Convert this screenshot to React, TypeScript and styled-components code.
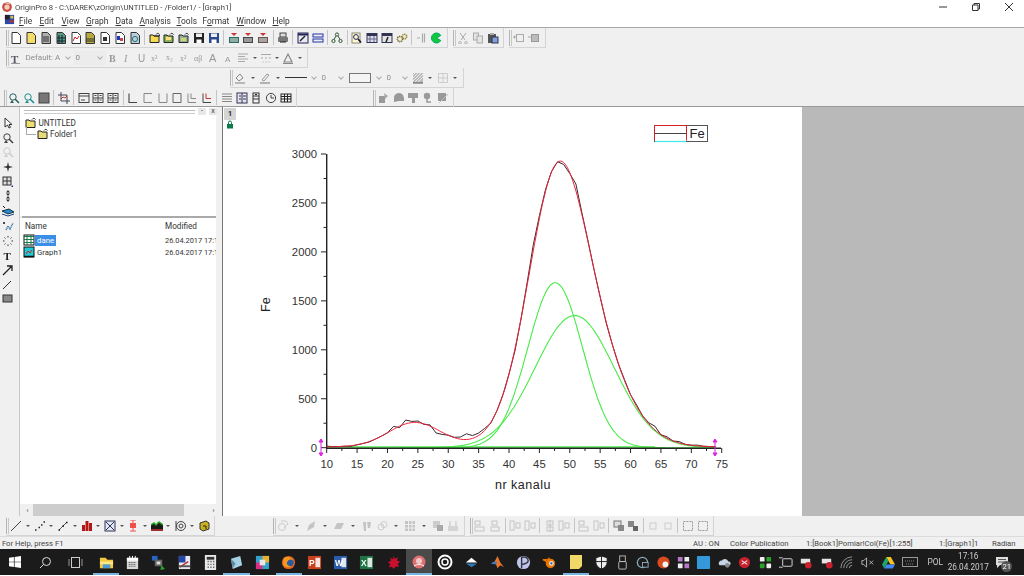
import React from "react";
import styled, { createGlobalStyle } from "styled-components";

const GlobalStyle = createGlobalStyle`
    html, body {
        margin: 0;
        width: 1024px;
        height: 576px;
        overflow: hidden;
        background: #fff;
        font-family: Roboto, "Liberation Sans", Arial, sans-serif;
    }
`
const Window = styled.div`
    width: 1024px;
    height: 576px;
    display: flex;
    flex-direction: column;
    font-size: 8px;
    color: #333;
    filter: blur(0.3px);
`
const TitleBar = styled.div`
    height: 14px;
    display: flex;
    align-items: center;
    padding-left: 1px;
    gap: 2px;
    font-size: 7.7px;
    color: #444;
`
const TitleText = styled.span`
    flex: 1;
`
const WinButton = styled.span`
    width: 31px;
    display: flex;
    justify-content: center;
`
const MenuBar = styled.div`
    height: 13px;
    display: flex;
    align-items: center;
    padding-left: 4px;
    font-size: 8.4px;
`
const MenuItem = styled.span<{ $w: number }>`
    width: ${p => p.$w}px;
    u { text-underline-offset: 1px; }
`
const ToolArea = styled.div`
    height: 80px;
    background: #f0f0f0;
    border-top: 1px solid #a8a8a8;
    border-bottom: 1px solid #9a9a9a;
    box-sizing: border-box;
`
const Row = styled.div<{ $pad: number }>`
    height: 20px;
    display: flex;
    padding-left: ${p => p.$pad}px;
`
const Toolbar = styled.div<{ $gap?: number; $btn?: number; $arrow?: number }>`
    --btn: ${p => p.$btn ?? 14.8}px;
    --arrow: ${p => p.$arrow ?? 10}px;
    margin-left: ${p => p.$gap ?? 0}px;
    display: flex;
    align-items: center;
    height: 19px;
    padding-right: 3px;
    border-right: 1px solid #d4d4d4;
    border-bottom: 1px solid #d4d4d4;
`
const Gripper = styled.i`
    width: 3px;
    height: 16px;
    flex: none;
    box-sizing: border-box;
    border-left: 1px solid #b4b4b4;
    border-right: 1px solid #c8c8c8;
`
const Btn = styled.span<{ $off?: boolean }>`
    width: var(--btn);
    flex: none;
    display: flex;
    justify-content: center;
    opacity: ${p => (p.$off ? 0.5 : 1)};
    svg { flex: none; }
`
const Arrow = styled.span`
    width: var(--arrow);
    flex: none;
    display: flex;
    justify-content: center;
    &::after {
        content: "";
        border-left: 2.5px solid transparent;
        border-right: 2.5px solid transparent;
        border-top: 2.5px solid #555;
    }
`
const Sep = styled.span`
    width: 5px;
    height: 15px;
    flex: none;
    display: flex;
    justify-content: center;
    &::after {
        content: "";
        width: 1px;
        background: #c4c4c4;
    }
`
const Combo = styled.span<{ $w: number; $faint?: boolean }>`
    width: ${p => p.$w}px;
    height: 14px;
    flex: none;
    box-sizing: border-box;
    display: flex;
    align-items: center;
    padding: 0 2px;
    gap: 2px;
    font-size: 8px;
    color: #8c8c8c;
    background: ${p => (p.$faint ? "#ececec" : "transparent")};
    &::after {
        content: "";
        width: 4px;
        height: 4px;
        margin: -2px 2px 0 auto;
        flex: none;
        box-sizing: border-box;
        border-right: 1px solid #aaa;
        border-bottom: 1px solid #aaa;
        transform: rotate(45deg);
    }
`
const LineSample = styled.i`
    width: 22px;
    height: 1px;
    background: #333;
`
const RectSample = styled.i`
    width: 20px;
    height: 8px;
    border: 1px solid #777;
    background: #f4f4f4;
`
const Main = styled.div`
    height: 409px;
    display: flex;
`
const SideTools = styled.div`
    width: 20px;
    background: #f0f0f0;
    padding: 10px 3px 0 0;
    box-sizing: border-box;
    display: flex;
    flex-direction: column;
    align-items: center;
    gap: 2.7px;
    border-right: 1px solid #c8c8c8;
`
const SideTool = styled.span`
    display: flex;
    height: 12px;
`
const Explorer = styled.div`
    width: 203px;
    flex: none;
    background: #f0f0f0;
    border-right: 1px solid #777;
    box-sizing: border-box;
    display: flex;
    flex-direction: column;
    padding-right: 6px;
`
const DockHead = styled.div`
    height: 9px;
    display: flex;
    align-items: center;
    background: #fff;
    padding: 0 0 0 4px;
    gap: 3px;
    margin-right: -1px;
`
const DockLine = styled.i`
    flex: 1;
    height: 2px;
    border-top: 1px solid #bbb;
    border-bottom: 1px solid #ccc;
`
const DockBtn = styled.span`
    width: 8px;
    font-size: 7px;
    line-height: 7px;
    text-align: center;
    color: #444;
    background: #e8e8e8;
`
const Tree = styled.div`
    height: 100px;
    background: #fff;
    padding: 1px 0 0 5px;
    box-sizing: border-box;
`
const TreeRow = styled.div<{ $depth: number }>`
    height: 11.5px;
    display: flex;
    align-items: center;
    gap: 1.5px;
    margin-left: ${p => p.$depth}px;
    font-size: 8.2px;
`
const TreeElbow = styled.i`
    width: 9px;
    height: 7px;
    margin: -7px -1px 0 -8px;
    border-left: 1px solid #aaa;
    border-bottom: 1px solid #aaa;
`
const Splitter = styled.div`
    height: 2px;
    margin: 0 0 0 2px;
    background: #a9a9a9;
`
const List = styled.div`
    flex: 1;
    background: #fff;
    padding: 2px 0 0 5px;
    overflow: hidden;
`
const ListRow = styled.div`
    height: 12px;
    display: grid;
    grid-template-columns: 140px 52px;
    align-items: center;
    font-size: 7.4px;
    white-space: nowrap;
`
const ListHead = styled(ListRow)`
    margin-bottom: 2px;
    font-size: 8.2px;
`
const NameCell = styled.span`
    display: flex;
    align-items: center;
    margin-left: -2px;
    font-size: 7.8px;
`
const Name = styled.span<{ $sel?: boolean }>`
    padding: 1px 2px;
    color: ${p => (p.$sel ? "#fff" : "#333")};
    background: ${p => (p.$sel ? "#3b8fe6" : "transparent")};
`
const HScroll = styled.div`
    height: 12px;
    margin: 0 -3px 0 2px;
    background: #f0f0f0;
    display: flex;
    align-items: center;
    font-size: 8px;
    color: #555;
`
const ScrollEnd = styled.span`
    width: 11px;
    text-align: center;
`
const ScrollThumb = styled.i`
    width: 151px;
    height: 100%;
    background: #cdcdcd;
`
const ScrollRest = styled.i`
    flex: 1;
`
const Page = styled.div`
    width: 579px;
    position: relative;
    background: #fff;
    flex: none;
`
const PageTab = styled.span`
    position: absolute;
    left: 1px;
    top: 1px;
    width: 12px;
    height: 12px;
    background: #d4d4d4;
    text-align: center;
    font-weight: bold;
    font-size: 8px;
    line-height: 12px;
`
const LockMark = styled.span`
    position: absolute;
    left: 3px;
    top: 13px;
`
const Plot = styled.svg`
    display: block;
`
const Grey = styled.div`
    flex: 1;
    background: #b9b9b9;
`
const BottomBar = styled.div`
    height: 20px;
    background: #f0f0f0;
    display: flex;
    padding-left: 6px;
`
const StatusBar = styled.div`
    height: 13px;
    background: #f0f0f0;
    border-top: 1px solid #dcdcdc;
    box-sizing: border-box;
    display: flex;
    align-items: center;
    font-size: 7.7px;
    color: #444;
`
const StatusCell = styled.span<{ $w: number }>`
    width: ${p => p.$w}px;
    flex: none;
    white-space: nowrap;
`
const Taskbar = styled.div`
    height: 26px;
    background: #1b1b1b;
    display: flex;
    align-items: stretch;
    color: #ddd;
`
const TaskSlot = styled.span<{ $w: number; $active?: boolean; $running?: boolean; $gap?: number }>`
    width: ${p => p.$w}px;
    flex: none;
    margin-left: ${p => p.$gap ?? 0}px;
    display: flex;
    align-items: center;
    justify-content: center;
    box-sizing: border-box;
    background: ${p => (p.$active ? "#4a4a4a" : "transparent")};
    border-bottom: 2px solid ${p => (p.$running ? "#7ab4de" : "transparent")};
    border-top: 2px solid transparent;
`
const Lang = styled.span`
    font-size: 8.4px;
    color: #ccc;
`
const Clock = styled.span`
    text-align: center;
    font-size: 8.2px;
    line-height: 11px;
    color: #ccc;
`
const NotifyCount = styled.span`
    position: absolute;
    right: -4px;
    bottom: -4px;
    width: 11px;
    height: 11px;
    border-radius: 50%;
    background: #555;
    color: #fff;
    font-size: 7.6px;
    line-height: 11px;
    text-align: center;
`
const Notify = styled.span`
    position: relative;
    display: flex;
`

// ---- toolbar icons ----
const sv = (children: React.ReactNode, size = 12) => (
    <svg width={size} height={size} viewBox="0 0 12 12" fill="none">{children}</svg>
)
const doc = (fill: string, inner?: React.ReactNode) => (
    <>
        <path d="M2 .5h5.5L10.5 3.5v8H2z" fill={fill} stroke="#333" />
        {inner}
    </>
)
const folder = (fill: string, inner?: React.ReactNode) => (
    <>
        <path d="M1 3h3l1 1h5v6.5H1z" fill={fill} stroke="#222" />
        <path d="M7 2.5c1-1.5 2.5-1.5 3.5 0" stroke="#222" />
        {inner}
    </>
)
const floppy = (fill: string) => (
    <>
        <rect x="1" y="1" width="10" height="10" fill={fill} />
        <rect x="3" y="1.5" width="6" height="3.5" fill="#eee" />
        <rect x="3.5" y="7.5" width="5" height="3.5" fill="#fff" />
    </>
)
const imp = (c: string) => (
    <>
        <rect x="1" y="5" width="10" height="6" fill={c} />
        <path d="M2 7h8M2 9h8" stroke="#eee" />
        <path d="M3 1l3 3 3-3z" fill="#c33" />
    </>
)
const frame = (d: string) => <path d={d} stroke="#444" strokeWidth="1.1" />
const grid2 = (
    <>
        <rect x="1" y="1.5" width="10" height="9" stroke="#444" />
        <path d="M1 6h10M6 1.5v9" stroke="#444" />
        <path d="M2.5 3.5h2M7.5 3.5h2M2.5 8h2M7.5 8h2" stroke="#444" />
    </>
)
const cmb = (c: string) => (
    <>
        <circle cx="5" cy="5" r="3.2" stroke={c} />
        <path d="M7 7l4 4" stroke={c} strokeWidth="1.6" />
        <path d="M2 11l2-3 2 3z" fill={c} />
    </>
)
const letter = (ch: string, x: number, y: number, size: number, extra?: React.SVGProps<SVGTextElement>) => (
    <text x={x} y={y} fontSize={size} fontFamily="Liberation Serif" fill="#999" {...extra}>{ch}</text>
)

const icons: Record<string, React.ReactNode> = {
    new: sv(doc("#fff")),
    docY: sv(doc("#f4dc6a")),
    docG: sv(doc("#b0b0b0", <path d="M3 5h6M3 7h6M3 9h6" stroke="#333" />)),
    docT: sv(doc("#5a9a80", <path d="M4 3v8M7 3v8M2 6h8M2 9h8" stroke="#123" />)),
    docR: sv(doc("#fff", <path d="M3 9l2-4 2 2 2-3" stroke="#c22" />)),
    docO: sv(doc("#b6a83c", <path d="M2 7h8M2 9h8" stroke="#333" />)),
    docM: sv(doc("#fff", <rect x="4" y="5" width="4" height="4" fill="#333" />)),
    docB: sv(doc("#fff", <><rect x="3" y="4" width="3" height="4" fill="#23c" /><rect x="6" y="6" width="3" height="3" fill="#c44" /></>)),
    docC: sv(doc("#bcd", <circle cx="6" cy="7" r="2.6" stroke="#277" />)),
    open: sv(folder("#f4d84e", <path d="M5 4h5l1-1" stroke="#222" />)),
    openT: sv(folder("#8ab45c", <rect x="3" y="5" width="5" height="3" fill="#ffe27a" />)),
    openG: sv(folder("#9ab0a0", <rect x="3" y="6" width="5" height="3" fill="#c9d86a" />)),
    save: sv(floppy("#222")),
    saveAs: sv(floppy("#2a4a90")),
    impA: sv(imp("#2c6a5c")),
    impB: sv(imp("#444")),
    impC: sv(imp("#655")),
    print: sv(<><rect x="3" y="1" width="6" height="4" fill="#ddd" stroke="#444" /><rect x="1" y="5" width="10" height="5" rx="1" fill="#777" /><path d="M3 10h6" stroke="#222" /></>),
    notes: sv(<><rect x="1" y="1" width="10" height="10" fill="#e8e8f4" stroke="#225" /><path d="M1 2.5h10" stroke="#225" strokeWidth="2" /><path d="M3 9l5-5" stroke="#222" strokeWidth="1.5" /></>),
    lines: sv(<><rect x="1" y="2" width="10" height="3" stroke="#2233aa" /><rect x="1" y="7" width="10" height="3" stroke="#2233aa" /></>),
    tree: sv(<><circle cx="6" cy="2.5" r="1.6" stroke="#353" /><circle cx="2.5" cy="9" r="1.6" stroke="#353" /><circle cx="9.5" cy="9" r="1.6" stroke="#353" /><path d="M5 4l-2 3.5M7 4l2 3.5" stroke="#353" /></>),
    find: sv(<><rect x="1" y="1" width="8" height="10" fill="#fffbd0" stroke="#887" /><circle cx="5" cy="5" r="2.4" stroke="#226" /><path d="M7 7l3 3.5" stroke="#113" strokeWidth="1.6" /></>),
    sheet: sv(<><rect x="1" y="1.5" width="10" height="9" fill="#dde" stroke="#335" /><path d="M1 3h10" stroke="#335" strokeWidth="2" /><path d="M4 4v6M8 4v6M1 7h10" stroke="#668" /></>),
    sheet2: sv(<><rect x="1" y="1.5" width="10" height="9" fill="#e4e4e4" stroke="#335" /><path d="M1 3h10" stroke="#335" strokeWidth="2" /><path d="M7 5L5 10" stroke="#222" strokeWidth="1.5" /></>),
    gears: sv(<><circle cx="4" cy="7" r="2.6" stroke="#7a6a20" strokeWidth="1.6" strokeDasharray="1.2 .6" /><circle cx="8.5" cy="4.5" r="2.2" stroke="#998428" strokeWidth="1.6" strokeDasharray="1.2 .6" /></>),
    bars: sv(<path d="M2 6h3M7.5 1.5v9M9.5 1.5v9" stroke="#aaa" strokeWidth="1.2" />),
    pac: sv(<path d="M10.8 3.5A5 5 0 1 0 10.8 8.5L6.5 6z" fill="#12c93c" stroke="#0a6" />),
    cut: sv(<path d="M3 1l5 7M9 1L4 8M3 9.5a1.3 1.3 0 1 0 .1 0M9 9.5a1.3 1.3 0 1 0 .1 0" stroke="#aaa" />),
    copy: sv(<><rect x="1.5" y="1" width="5" height="7" fill="#e4e4e4" stroke="#aaa" /><rect x="5" y="4" width="5.5" height="7" fill="#e4e4e4" stroke="#aaa" /></>),
    paste: sv(<><rect x="1" y="2" width="8" height="9" fill="#555" /><rect x="3" y="1" width="4" height="2" fill="#aaa" /><rect x="5" y="5" width="6" height="6" fill="#7da0e0" stroke="#334" /></>),
    win1: sv(<><rect x="3.5" y="2.5" width="7" height="7" stroke="#aaa" /><path d="M0 5h3M1.5 3.5v3" stroke="#aaa" /></>),
    win2: sv(<><rect x="3.5" y="2.5" width="7" height="7" fill="#bbb" stroke="#999" /><path d="M0 5h3" stroke="#aaa" /></>),
    typeT: sv(<><text x="1" y="10.5" fontSize="11" fontWeight="bold" fontFamily="Liberation Serif" fill="#556">T</text><path d="M1 11.5h9" stroke="#999" /></>),
    bold: sv(letter("B", 2, 10, 10, { fontWeight: "bold" })),
    ital: sv(letter("I", 3, 10, 10, { fontStyle: "italic" })),
    under: sv(letter("U", 2, 10, 10, { fontFamily: "Liberation Sans" })),
    sup: sv(letter("x²", 1, 9, 8)),
    sub: sv(letter("x₂", 1, 8, 8)),
    subsup: sv(letter("x²", 1, 9, 8)),
    greek: sv(letter("αβ", 0, 9, 8)),
    aUp: sv(letter("A", 1, 10, 11, { fontFamily: "Liberation Sans" })),
    aDown: sv(letter("A", 2, 10, 8, { fontFamily: "Liberation Sans" })),
    align: sv(<path d="M1 2h10M1 4.5h7M1 7h10M1 9.5h7" stroke="#aaa" />),
    dash: sv(<path d="M1 2.5h10M1 6h2M5 6h2M9 6h2M3 9.5v1M6 9.5v1M9 9.5v1" stroke="#aaa" />),
    fontCol: sv(<><path d="M2 10L6 2l4 8z" stroke="#888" strokeWidth="1.2" /><path d="M1 11.5h10" stroke="#888" /></>),
    fill: sv(<><path d="M2 6l4-4 3 4-4 3z" stroke="#888" /><path d="M1 11h10" stroke="#aaa" strokeWidth="1.6" /></>),
    pen: sv(<><path d="M3 8l5-6 2 1-5 6z" stroke="#999" /><path d="M1 11h10" stroke="#888" strokeWidth="1.2" /></>),
    pattern: sv(<><rect x="1" y="1" width="10" height="10" fill="#bbb" /><path d="M1 3l2-2M1 6l5-5M1 9l8-8M3 10l8-8M6 10l5-5" stroke="#fff" strokeWidth=".7" /><path d="M1 11h10" stroke="#555" /></>),
    border: sv(<path d="M1.5 1.5h9v9h-9zM6 1.5v9M1.5 6h9" stroke="#ccc" />),
    rescale: sv(cmb("#2a6060")),
    rescale2: sv(cmb("#1f8e8e")),
    block: sv(<rect x="1" y="1" width="10" height="10" fill="#777" stroke="#444" />),
    crop: sv(<><path d="M3 0v9h9M0 3h9v9" stroke="#445" /><path d="M3 7l2-2 2 1 2-2" stroke="#c33" /></>),
    frameA: sv(<><rect x="1" y="1.5" width="10" height="9" stroke="#444" /><path d="M1 4h10M3 8h4" stroke="#444" /></>),
    gridA: sv(grid2),
    gridB: sv(grid2),
    ln1: sv(frame("M2 1.5v9h8")),
    ln2: sv(<path d="M10 1.5H2v9h8" stroke="#888" />),
    ln3: sv(<path d="M2 1.5v9h8v-9" stroke="#888" />),
    ln4: sv(<path d="M2 10.5v-9h8v9h-8" stroke="#666" />),
    ln5: sv(<><path d="M2 1.5v9h8" stroke="#888" /><path d="M5 1.5v5h5" stroke="#888" /></>),
    ln6: sv(<><path d="M2 1.5v9h8" stroke="#444" /><path d="M5 1.5v5h5" stroke="#c33" /></>),
    list: sv(<path d="M1 2h10M1 4.5h10M1 7h10M1 9.5h10" stroke="#888" />),
    cols: sv(<><rect x="1" y="1" width="10" height="10" fill="#e4e4ee" stroke="#335" /><path d="M6 1v10M3 4h2M7 4h3M3 7h2M7 7h3" stroke="#335" /></>),
    thin: sv(<><rect x="3" y="1" width="6" height="10" stroke="#333" /><path d="M3 4h6M3 7h6" stroke="#333" /><rect x="5" y="2" width="2" height="1" fill="#333" /></>),
    clock: sv(<><circle cx="6" cy="6" r="4.6" stroke="#444" /><path d="M6 3v3h3" stroke="#444" /></>),
    table: sv(<><rect x="1" y="2" width="10" height="8" stroke="#222" /><path d="M1 4.5h10M1 7h10M4.5 2v8M7.5 2v8" stroke="#222" /></>),
    g1: sv(<><rect x="1" y="4" width="6" height="7" fill="#999" /><path d="M6 1l4 3-3 3z" fill="#aaa" /></>),
    g2: sv(<path d="M1 6a5 5 0 0 1 9-3l1 3v3H6L1 10z" fill="#999" />),
    g3: sv(<><rect x="1" y="1" width="10" height="5" fill="#999" /><rect x="5" y="6" width="3" height="5" fill="#999" /></>),
    g4: sv(<><circle cx="5" cy="4" r="3.2" fill="#999" /><path d="M5 7v3h4" stroke="#999" strokeWidth="1.5" /></>),
    g5: sv(<><rect x="1" y="1" width="8" height="8" fill="#999" /><path d="M2 11L11 2" stroke="#bbb" /></>),
    lineA: sv(<path d="M1 11L11 1" stroke="#444" />),
    dots: sv(<path d="M1 10h1.5M4.5 7.5H6M7 5h1.5M9.5 2H11" stroke="#222" strokeWidth="1.4" />),
    lineS: sv(<><path d="M2 10l8-8" stroke="#555" /><path d="M1.5 10H3M5.5 6H7M9 2.5h1.5" stroke="#111" strokeWidth="1.5" /></>),
    columns: sv(<><rect x="1" y="5" width="3" height="6" fill="#b01818" /><rect x="4.5" y="1" width="3" height="10" fill="#b01818" /><rect x="8" y="3" width="3" height="8" fill="#b01818" /></>),
    scatterBox: sv(<><rect x="1" y="1" width="10" height="10" fill="#dfe8f4" stroke="#335" /><path d="M2 10l8-8M2 2l8 8" stroke="#335" /></>),
    boxPlot: sv(<><rect x="3" y="3" width="6" height="5" fill="#f05050" /><path d="M6 0v3M6 8v3M3 11h6M3 0h6" stroke="#f05050" /></>),
    area: sv(<><path d="M0 11V5l3-2 2 2 3-3 4 3v6z" fill="#1a1a1a" /><path d="M0 5l3-2 2 2 3-3 4 3" stroke="#28a428" strokeWidth="1.5" /><path d="M0 11V9h12v2z" fill="#a03030" /></>),
    polar: sv(<><circle cx="7" cy="6" r="4.5" stroke="#444" /><circle cx="7" cy="6" r="2" stroke="#444" /><path d="M2 1v10" stroke="#444" /></>),
    cube: sv(<><path d="M2 3l6-2 3 2v6l-6 2-3-2z" fill="#c9b020" stroke="#333" /><path d="M5 6h3v3" stroke="#222" /></>),
    fadeA: sv(<><circle cx="5" cy="7" r="3.5" stroke="#aaa" /><path d="M4 1h5l2 3-4 4" stroke="#aaa" /></>),
    fadeB: sv(<path d="M2 11l2-6 6-4-1 6z" fill="#999" />),
    fadeC: sv(<path d="M1 9l3-6h7l-3 6z" fill="#999" />),
    fadeD: sv(<path d="M2 2h3v9H3zM6 2h4l-1 6H7z" fill="#999" />),
    fadeE: sv(<><circle cx="5" cy="7" r="3" stroke="#aaa" /><circle cx="8" cy="4.5" r="3" stroke="#aaa" /></>),
    fadeF: sv(<><rect x="1" y="1" width="10" height="10" fill="#999" /><path d="M1 4.5h10M1 8h10M4.5 1v10M8 1v10" stroke="#eee" /></>),
    fadeG: sv(<><rect x="1" y="1" width="7" height="7" fill="#aaa" /><rect x="5" y="5" width="6" height="6" fill="#666" /></>),
    fadeH: sv(<><path d="M1 11V6h10v5z" fill="#bbb" /><path d="M3 1v5M9 1v5" stroke="#999" /></>),
    al1: sv(<><rect x="1" y="1" width="5" height="4" stroke="#c4c4c4" /><rect x="1" y="7" width="9" height="4" stroke="#c4c4c4" /></>),
    al2: sv(<><rect x="3" y="1" width="5" height="4" stroke="#c4c4c4" /><rect x="2" y="7" width="8" height="4" stroke="#c4c4c4" /></>),
    al3: sv(<><rect x="1" y="1" width="4" height="9" stroke="#c4c4c4" /><rect x="7" y="3" width="4" height="5" stroke="#c4c4c4" /></>),
    al4: sv(<><rect x="3" y="1" width="6" height="4" stroke="#c4c4c4" /><rect x="3" y="7" width="6" height="4" stroke="#c4c4c4" /><path d="M6 0v12" stroke="#c4c4c4" /></>),
    order: sv(<><rect x="1" y="1" width="7" height="6" fill="#ddd" stroke="#777" /><rect x="5" y="5" width="6" height="6" fill="#888" /></>),
    order2: sv(<><rect x="1" y="1" width="6" height="6" fill="#888" /><rect x="6" y="6" width="5" height="5" fill="#666" /></>),
    small: sv(<rect x="3" y="3" width="6" height="6" stroke="#ccc" />),
    dashBox: sv(<rect x="1.5" y="1.5" width="9" height="9" stroke="#999" strokeDasharray="2 1" />),
}

const build = (spec: string, off = false) =>
    spec.split(" ").map((t, i) => {
        if (t === "|") return <Sep key={i} />
        if (t === "v") return <Arrow key={i} />
        return <Btn key={i} $off={off}>{icons[t]}</Btn>
    })

// ---- side tool icons ----
const sideIcons: React.ReactNode[] = [
    <path d="M3 1v9l2.5-2 1.5 3 1.5-.7L7 7.5h3z" fill="#fff" stroke="#333" />,
    cmb("#444"),
    cmb("#ccc"),
    <path d="M6 1l1 4 4 1-4 1-1 4-1-4-4-1 4-1z" fill="#333" />,
    <><rect x="1" y="1" width="8" height="8" fill="#ddd" stroke="#333" /><path d="M5 1v8M1 5h8" stroke="#333" /><path d="M9 11l2-2v2z" fill="#22a" /></>,
    <path d="M6 0l2 2.5H4zM6 6L8 3.5H4zM6 6l2 2.5H4zM6 12l2-2.5H4z" fill="#333" />,
    <><path d="M0 6l7-2 5 3-6 2z" fill="#2a8ac8" stroke="#134" /><path d="M0 9l6 2 6-2" stroke="#248" /><path d="M1 1l2 2" stroke="#111" /></>,
    <><circle cx="2" cy="3" r="1" fill="#111" /><path d="M4 10l2-4 2 3 3-6" stroke="#2a6a9a" strokeWidth="1.4" strokeDasharray="1 .6" /></>,
    <path d="M6 1v1.5M6 9.500V11M1 6h1.5M9.500 6H11M2.500 2.500l1 1M8.500 8.500l1 1M2.500 9.500l1-1M8.500 3.500l1-1" stroke="#333" />,
    <text x="1.5" y="10.5" fontSize="11" fontWeight="bold" fontFamily="Liberation Serif" fill="#222">T</text>,
    <path d="M1 11L10 2M5 2h5v5" stroke="#222" strokeWidth="1.3" />,
    <path d="M1 10L9 2" stroke="#333" />,
    <rect x="1" y="2" width="9" height="7" fill="#888" stroke="#333" />,
]

// ---- plot ----
const X = (c: number) => 326.7 + (c - 10) * 6.077
const Y = (v: number) => 448.7 - v * 0.0979
const gauss = (c: number, h: number, m: number, s: number) => h * Math.exp(-((c - m) ** 2) / (2 * s * s))
const peakA = (c: number) => gauss(c, 1685, 47.6, 4.5)
const peakB = (c: number) => gauss(c, 1350, 50.8, 6.5)
const peakC = (c: number) => gauss(c, 250, 24.5, 4.3)
const fit = (c: number) => peakA(c) + peakB(c) + peakC(c) + 8
const noise: Record<number, number> = {
    10: 8, 14: -6, 17: -4, 21: 30, 22: -14, 23: 40, 24: 12, 25: 16, 26: -6, 27: 12, 28: -40, 29: -22, 31: 4, 32: 22, 33: 58, 34: 28,
    35: 26, 36: 20, 37: -8, 41: -20, 43: 25, 44: 60, 45: 30, 46: 20, 47: 5, 48: 5, 49: -20, 50: -10, 51: 70, 52: 20, 53: 10,
    56: -10, 59: 10, 61: 15, 63: 10, 64: 38, 66: 15, 68: 14, 71: 8,
}
const points = (f: (c: number) => number, step: number, from = 10, to = 74) => {
    const out: string[] = []
    for (let c = from; c <= to; c += step) out.push(`${X(c).toFixed(1)},${Y(f(c)).toFixed(1)}`)
    return out.join(" ")
}
const xLabels = [10, 15, 20, 25, 30, 35, 40, 45, 50, 55, 60, 65, 70, 75]
const xMinors = xLabels.slice(0, -1).map(v => v + 2.5)
const yLabels = [0, 500, 1000, 1500, 2000, 2500, 3000]
const yMinors = yLabels.slice(0, -1).map(v => v + 250)

const Handle = ({ x }: { x: number }) => (
    <path d={`M${x} 442v13M${x - 2} 443l2-3 2 3zM${x - 2} 454l2 3 2-3z`} stroke="#e020e0" fill="#e020e0" strokeWidth="1" />
)

const Graph = () => (
    <Plot width="579" height="409" viewBox="223 108 579 409">
        <g stroke="#48ea48" strokeWidth="1.1" fill="none">
            <polyline points={points(peakA, 0.25, 28, 74)} />
            <polyline points={points(peakB, 0.25, 22, 74)} />
            <path d={`M${X(10)} 448H${X(64)}`} strokeWidth="1.5" />
        </g>
        <path d="M326.7 155V449.5M326 449.2H721" stroke="#222" strokeWidth="1.4" />
        <g stroke="#222" strokeWidth="1">
            {yLabels.map(v => <path key={v} d={`M321 ${Y(v)}H326`} />)}
            {yMinors.map(v => <path key={v} d={`M323.5 ${Y(v)}H326`} />)}
            {xLabels.map(v => <path key={v} d={`M${X(v)} 449v5`} />)}
            {xMinors.map(v => <path key={v} d={`M${X(v)} 449v3`} />)}
        </g>
        <polyline points={points(c => fit(c) + (noise[c] ?? 0), 1)} fill="none" stroke="#3a2a2a" strokeWidth="1" />
        <polyline points={points(fit, 0.25)} fill="none" stroke="#f0203c" strokeWidth="1" />
        <Handle x={321} />
        <Handle x={715} />
        <g fontFamily="Liberation Sans" fontSize="11.3" fill="#333">
            {yLabels.map(v => <text key={v} x="317" y={Y(v) + 4} textAnchor="end">{v}</text>)}
            {xLabels.map(v => <text key={v} x={X(v)} y="468.5" textAnchor="middle">{v}</text>)}
        </g>
        <text x="495" y="490" fontFamily="Liberation Sans" fontSize="12.5" fill="#222" letterSpacing=".5">nr kanalu</text>
        <text transform="translate(270 313) rotate(-90)" fontFamily="Liberation Sans" fontSize="12.5" fill="#222">Fe</text>
        <rect x="654.5" y="126.5" width="53" height="16" fill="#fff" stroke="#555" />
        <path d="M655 134.5H686" stroke="#444" />
        <path d="M655 142.5H686" stroke="#3fe8e8" strokeWidth="1.2" />
        <path d="M654.5 141.5V126.5H686.5V141.5" fill="none" stroke="#d8202c" />
        <text x="689.5" y="139" fontFamily="Liberation Sans" fontSize="13" fill="#222">Fe</text>
    </Plot>
)

// ---- taskbar icons ----
const ts = (children: React.ReactNode, size = 15) => (
    <svg width={size} height={size} viewBox="0 0 16 16" fill="none">{children}</svg>
)
const office = (bg: string, ch: string) => ts(
    <>
        <rect x="1" y="1" width="14" height="14" fill={bg} />
        <rect x="9" y="3" width="5" height="10" fill="#fff" opacity=".85" />
        <text x="2" y="12" fontSize="9" fontWeight="bold" fontFamily="Liberation Sans" fill="#fff">{ch}</text>
    </>,
)
const pinned: { icon: React.ReactNode; running?: boolean; active?: boolean }[] = [
    { running: true, icon: ts(<><path d="M1 3h6l2 2h6v9H1z" fill="#f5c93e" /><rect x="1" y="7" width="14" height="3" fill="#fde68a" /><rect x="4" y="10" width="8" height="4" fill="#4a9cd6" /></>) },
    { icon: ts(<><rect x="2" y="3" width="12" height="12" fill="#d8d8d8" /><rect x="2" y="3" width="12" height="3" fill="#fff" /><path d="M5 1v3M8 1v3M11 1v3" stroke="#fff" /><path d="M4 8h8M4 10h8M4 12h8" stroke="#333" strokeDasharray="1 1" /></>) },
    { icon: ts(<><rect x="1" y="1" width="6" height="5" fill="#2565c8" /><rect x="4" y="5" width="8" height="7" fill="#666" /><rect x="6" y="7" width="4" height="3" fill="#ddd" /><path d="M11 11l4 4-5 1z" fill="#2ca02c" /></>) },
    { icon: ts(<><rect x="2" y="1" width="12" height="14" fill="#e8e8f0" /><rect x="2" y="1" width="7" height="7" fill="#2548a8" /><path d="M3 13l9-6" stroke="#c03030" strokeWidth="1.5" /><rect x="2" y="11" width="12" height="2" fill="#555" /></>) },
    { icon: ts(<><rect x="2" y="0" width="12" height="16" fill="#e8e8e8" /><rect x="4" y="2" width="8" height="3" fill="#333" /><path d="M5 7h1M8 7h1M11 7h1M5 10h1M8 10h1M11 10h1M5 13h1M8 13h1M11 13h1" stroke="#333" strokeWidth="1.5" /></>) },
    { running: true, icon: ts(<><path d="M2 4l10-3 2 10-10 4z" fill="#a8d0e4" /><path d="M4 14L2 4l5 5z" fill="#5d8a9e" /></>) },
    { icon: ts(<><rect x="1" y="1" width="14" height="14" fill="#35a0c8" /><rect x="8" y="1" width="7" height="7" fill="#e8b030" /><rect x="1" y="8" width="7" height="7" fill="#d83080" /><rect x="5" y="5" width="6" height="6" fill="#e8e8e8" /></>) },
    { running: true, icon: ts(<><circle cx="8" cy="8" r="7" fill="#e8641e" /><circle cx="9" cy="8" r="4.5" fill="#2a5aa0" /><path d="M3 3c4-2 8-1 10 3-3-2-5-1-6 1-2 2 0 5 4 5-3 2-7 1-9-2z" fill="#f59a1e" /></>) },
    { icon: office("#c8401e", "P") },
    { icon: office("#2a5aa8", "W") },
    { icon: office("#1f7244", "X") },
    { icon: ts(<path d="M8 1l1.5 3 3-1.500-.7 3.500 3.200 1-2.500 2.500 1.500 3-3.500-.3L8 15l-1.500-2.300-3.500.3 1.500-3L2 7.500l3.200-1-.7-3.500 3 1.500z" fill="#c8102e" />) },
    { active: true, running: true, icon: ts(<><circle cx="8" cy="8" r="6.5" fill="#e07070" /><circle cx="8" cy="7" r="3" fill="#f0c8c8" /><path d="M3 12c3-2 7-2 10 0" stroke="#fff" /></>, 16) },
    { icon: ts(<><circle cx="8" cy="8" r="6.5" stroke="#fff" strokeWidth="2" /><circle cx="8" cy="8" r="3" stroke="#fff" strokeWidth="1.5" /></>, 16) },
    { icon: ts(<><path d="M8 3l6 5H2z" fill="#fff" /><path d="M2 9h12l-6 4z" fill="#2a7ab8" /></>) },
    { icon: ts(<><path d="M1 9l4-2 3-6 3 7 4 5-4-2-3 3-2-5z" fill="#e8752a" /><path d="M1 9l4-2 3 1-2 2z" fill="#3a7ac8" /></>) },
    { icon: ts(<><circle cx="8" cy="8" r="7" fill="#c0c4e8" /><path d="M6 2v12M6 2c5 0 7 2 7 4s-3 4-7 4" stroke="#334" strokeWidth="1.5" /></>) },
    { icon: ts(<><circle cx="9" cy="9" r="5" fill="#ea7600" /><circle cx="10" cy="9" r="2.5" fill="#e8e8e8" /><circle cx="10" cy="9" r="1.2" fill="#2a5aa0" /><path d="M5 7L1 5h5l2-2" stroke="#ea7600" strokeWidth="1.5" /></>) },
    { running: true, icon: ts(<path d="M2 1h12v11l-3 3H2z" fill="#f2d868" />, 16) },
]
const tray: React.ReactNode[] = [
    ts(<path d="M8 1l6 2v5c0 3-3 6-6 7-3-1-6-4-6-7V3zM8 1v14M2 7h12" fill="#eee" stroke="#1b1b1b" />),
    ts(<><rect x="5" y="1" width="6" height="6" stroke="#bbb" /><rect x="4" y="7" width="8" height="8" rx="1" stroke="#bbb" /></>),
    ts(<><circle cx="8" cy="8" r="5.5" stroke="#8ab" strokeWidth="1.4" /><rect x="8" y="8" width="6" height="5" fill="#1b1b1b" stroke="#8ab" /></>),
    ts(<><circle cx="8" cy="8" r="6.5" fill="#d84a20" /><circle cx="10" cy="10" r="3" fill="#f4f4f4" /></>),
    ts(<><path d="M2 2h5v5H2zM9 9h5v5H9z" fill="#b878c8" /><path d="M9 2h5v5H9zM2 9h5v5H2z" fill="#eee" /></>),
    ts(<rect x="1" y="1" width="14" height="14" rx="1" fill="#3498db" />),
    ts(<><path d="M2 10a3 3 0 0 1 3-4 4 4 0 0 1 7 1 2 2 0 0 1 1 4H3z" fill="#c4d4e4" /><circle cx="11" cy="11" r="2.5" fill="#888" /></>),
    ts(<><circle cx="8" cy="8" r="6" fill="#c8202c" /><path d="M5 6l6 4M11 6l-6 4" stroke="#eee" strokeWidth="1.2" /></>),
    ts(<><rect x="2" y="2" width="5" height="5" rx="1" fill="#eee" /><rect x="9" y="2" width="5" height="5" rx="1" fill="#2ca02c" /><rect x="2" y="9" width="5" height="5" rx="1" fill="#2ca02c" /><rect x="9" y="9" width="5" height="5" rx="1" fill="#eee" /></>),
    ts(<><rect x="5" y="4" width="10" height="8" rx="1" stroke="#ddd" /><path d="M1 3h4M1 13h4" stroke="#ddd" /></>),
    ts(<><rect x="3" y="4" width="10" height="5" fill="#e4e4e4" /><circle cx="11" cy="11" r="3.5" fill="#c8202c" /></>),
    ts(<><rect x="3" y="4" width="10" height="5" fill="#e4e4e4" /><circle cx="11" cy="11" r="3.5" fill="#c8202c" /></>),
    ts(<path d="M2 14a12 12 0 0 1 12-12M5 14a9 9 0 0 1 9-9M8 14a6 6 0 0 1 6-6M11 14a3 3 0 0 1 3-3" stroke="#999" />),
    ts(<><path d="M2 6h2l3-3v10l-3-3H2z" stroke="#bbb" /><path d="M10 6l4 4M14 6l-4 4" stroke="#bbb" /></>),
]

export default function App() {
    return (
        <Window>
            <GlobalStyle />
            <TitleBar>
                {ts(<><circle cx="8" cy="8" r="6.5" fill="#c94c3c" /><circle cx="8" cy="8" r="3.5" fill="#f2d0c0" /><path d="M4 2l8 2" stroke="#fff" /></>, 12)}
                <TitleText>OriginPro 8 - C:\DAREK\zOrigin\UNTITLED - /Folder1/ - [Graph1]</TitleText>
                <WinButton><svg width="10" height="10" viewBox="0 0 10 10"><path d="M1 5h8" stroke="#333" /></svg></WinButton>
                <WinButton><svg width="10" height="10" viewBox="0 0 10 10" fill="none"><path d="M1.5 3H7v5.5H1.5zM3 3V1.5h5.5V7H7" stroke="#333" /></svg></WinButton>
                <WinButton><svg width="10" height="10" viewBox="0 0 10 10"><path d="M1 1l8 8M9 1l-8 8" stroke="#333" /></svg></WinButton>
            </TitleBar>
            <MenuBar>
                <MenuItem $w={15}>
                    <svg width="11" height="11" viewBox="0 0 12 12"><rect x="1" y="1" width="10" height="10" fill="#2a4aa8" /><rect x="1" y="1" width="5" height="5" fill="#222" /><path d="M6 8h5" stroke="#c03030" strokeWidth="2" /><path d="M7 2h3v3H7z" fill="#d8c040" /></svg>
                </MenuItem>
                <MenuItem $w={20.5}><u>F</u>ile</MenuItem>
                <MenuItem $w={22}><u>E</u>dit</MenuItem>
                <MenuItem $w={24.5}><u>V</u>iew</MenuItem>
                <MenuItem $w={29.5}><u>G</u>raph</MenuItem>
                <MenuItem $w={24}><u>D</u>ata</MenuItem>
                <MenuItem $w={37}><u>A</u>nalysis</MenuItem>
                <MenuItem $w={26}><u>T</u>ools</MenuItem>
                <MenuItem $w={34}>F<u>o</u>rmat</MenuItem>
                <MenuItem $w={36}><u>W</u>indow</MenuItem>
                <MenuItem $w={24}><u>H</u>elp</MenuItem>
            </MenuBar>
            <ToolArea>
                <Row $pad={6}>
                    <Toolbar>
                        <Gripper />
                        {build("new docY docG docT docR docO docM docB docC | open openT openG save saveAs | impA impB impC | print | notes lines | tree | find sheet sheet2 gears | bars pac")}
                    </Toolbar>
                    <Toolbar $gap={5}>
                        <Gripper />
                        {build("cut copy paste")}
                    </Toolbar>
                    <Toolbar $gap={5}>
                        <Gripper />
                        {build("win1 win2")}
                    </Toolbar>
                </Row>
                <Row $pad={6}>
                    <Toolbar $btn={14.5} $arrow={8}>
                        <Gripper />
                        {build("typeT")}
                        <Combo $w={50}>Default: A</Combo>
                        <Combo $w={32} $faint>0</Combo>
                        {build("bold ital under sup sub subsup greek aUp aDown")}
                        {build("align v dash v fontCol v")}
                    </Toolbar>
                </Row>
                <Row $pad={230}>
                    <Toolbar $arrow={10}>
                        <Gripper />
                        {build("fill v pen v")}
                        <Combo $w={37}><LineSample /></Combo>
                        <Combo $w={27}>0</Combo>
                        <Combo $w={38}><RectSample /></Combo>
                        <Combo $w={26}>0</Combo>
                        {build("pattern v border v")}
                    </Toolbar>
                </Row>
                <Row $pad={4}>
                    <Toolbar>
                        <Gripper />
                        {build("rescale rescale2 block | crop | frameA gridA gridB | ln1 ln2 ln3 ln4 ln5 ln6 | list cols thin clock table")}
                    </Toolbar>
                    <Toolbar $gap={76}>
                        <Gripper />
                        {build("g1 g2 g3 g4 g5")}
                    </Toolbar>
                </Row>
            </ToolArea>
            <Main>
                <SideTools>
                    {sideIcons.map((s, i) => <SideTool key={i}>{sv(s)}</SideTool>)}
                </SideTools>
                <Explorer>
                    <DockHead>
                        <DockLine />
                        <DockBtn>-</DockBtn>
                        <DockBtn>x</DockBtn>
                    </DockHead>
                    <Tree>
                        <TreeRow $depth={0}>
                            {sv(folder("#eee070"))}
                            UNTITLED
                        </TreeRow>
                        <TreeRow $depth={9}>
                            <TreeElbow />
                            {sv(folder("#eadb7a"))}
                            Folder1
                        </TreeRow>
                    </Tree>
                    <Splitter />
                    <List>
                        <ListHead>
                            <span>Name</span>
                            <span>Modified</span>
                        </ListHead>
                        <ListRow>
                            <NameCell>
                                {sv(<><rect x="1" y="1" width="10" height="10" fill="#fff" stroke="#111" /><path d="M1 2.5h10M1 5.5h10M1 8.5h10M4 1v10M8 1v10" stroke="#1a7a4a" /></>)}
                                <Name $sel>dane</Name>
                            </NameCell>
                            <span>26.04.2017 17:1</span>
                        </ListRow>
                        <ListRow>
                            <NameCell>
                                {sv(<><rect x="1" y="1" width="10" height="10" fill="#20c8d8" stroke="#111" /><path d="M1 10.5h10" stroke="#111" strokeWidth="1.5" /><path d="M3 8l2-3 2 2 2-3" stroke="#c22" /></>)}
                                <Name>Graph1</Name>
                            </NameCell>
                            <span>26.04.2017 17:1</span>
                        </ListRow>
                    </List>
                    <HScroll>
                        <ScrollEnd>‹</ScrollEnd>
                        <ScrollThumb />
                        <ScrollRest />
                        <ScrollEnd>›</ScrollEnd>
                    </HScroll>
                </Explorer>
                <Page>
                    <PageTab>1</PageTab>
                    <LockMark>
                        <svg width="9" height="9" viewBox="0 0 9 9" fill="none"><rect x="1" y="4" width="6" height="4.5" fill="#0c7a4a" /><path d="M2.5 4V2.5a1.500 1.500 0 0 1 3 0V4" stroke="#0c7a4a" /></svg>
                    </LockMark>
                    <Graph />
                </Page>
                <Grey />
            </Main>
            <BottomBar>
                <Toolbar $arrow={8.6}>
                    <Gripper />
                    {build("lineA v dots v lineS v columns v scatterBox v boxPlot v area v polar v cube")}
                </Toolbar>
                <Toolbar $gap={58} $btn={15} $arrow={13}>
                    <Gripper />
                    {build("fadeA v fadeB v fadeC v", true)}
                    {build("fadeD fadeE v fadeF v fadeG fadeH", true)}
                </Toolbar>
                <Toolbar $gap={5}>
                    <Gripper />
                    {build("al1 al2 | al3 al3 | al4 al3 | al1 al3 | order order2 | small small | dashBox dashBox")}
                </Toolbar>
            </BottomBar>
            <StatusBar>
                <StatusCell $w={693}>&nbsp;For Help, press F1</StatusCell>
                <StatusCell $w={37}>AU : ON</StatusCell>
                <StatusCell $w={76}>Color Publication</StatusCell>
                <StatusCell $w={133}>1:[Book1]Pomiar!Col(Fe)[1:255]</StatusCell>
                <StatusCell $w={53}>1:[Graph1]1</StatusCell>
                <StatusCell $w={30}>Radian</StatusCell>
            </StatusBar>
            <Taskbar>
                <TaskSlot $w={30}>
                    <svg width="12" height="12" viewBox="0 0 12 12"><path d="M0 1.7l4.900-.7v4.700H0zM5.600.9L12 0v5.700H5.600zM0 6.300h4.900V11L0 10.300zM5.600 6.300H12V12l-6.400-.9z" fill="#fff" /></svg>
                </TaskSlot>
                <TaskSlot $w={30}>
                    <svg width="13" height="13" viewBox="0 0 13 13" fill="none"><circle cx="7.5" cy="5.5" r="4" stroke="#ddd" /><path d="M4.5 8.5L1 12" stroke="#ddd" /></svg>
                </TaskSlot>
                <TaskSlot $w={30}>
                    <svg width="15" height="11" viewBox="0 0 15 11" fill="none"><rect x="3.5" y=".5" width="8" height="10" stroke="#ccc" /><path d="M1 2v7M14 2v7" stroke="#999" /></svg>
                </TaskSlot>
                {pinned.map((p, i) => (
                    <TaskSlot key={i} $w={26.1} $gap={i === 0 ? 3 : 0} $running={p.running} $active={p.active}>{p.icon}</TaskSlot>
                ))}
                {tray.map((t, i) => (
                    <TaskSlot key={i} $w={20.4} $gap={i === 0 ? 3 : 0}>{t}</TaskSlot>
                ))}
                <TaskSlot $w={22}>
                    {ts(<><path d="M5.5 2h5l4.500 8h-5z" fill="#f6c026" /><path d="M5.5 2L1 10l2.500 4.500L8 6.500z" fill="#1fa463" /><path d="M3.5 14.500h9L15 10H6z" fill="#4285f4" /></>)}
                </TaskSlot>
                <TaskSlot $w={22}>
                    <svg width="16" height="10" viewBox="0 0 16 10" fill="none"><rect x=".5" y=".5" width="15" height="9" stroke="#999" /><path d="M3 4h10M4 7h8" stroke="#888" strokeDasharray="1 1" /></svg>
                </TaskSlot>
                <TaskSlot $w={28}><Lang>POL</Lang></TaskSlot>
                <TaskSlot $w={38}><Clock>17:16<br />26.04.2017</Clock></TaskSlot>
                <TaskSlot $w={30}>
                    <Notify>
                        <svg width="12" height="11" viewBox="0 0 12 11"><path d="M0 0h12v8H4L1 11V8H0z" fill="#ddd" /><path d="M2 2.500h8M2 5h8" stroke="#555" /></svg>
                        <NotifyCount>21</NotifyCount>
                    </Notify>
                </TaskSlot>
            </Taskbar>
        </Window>
    )
}
